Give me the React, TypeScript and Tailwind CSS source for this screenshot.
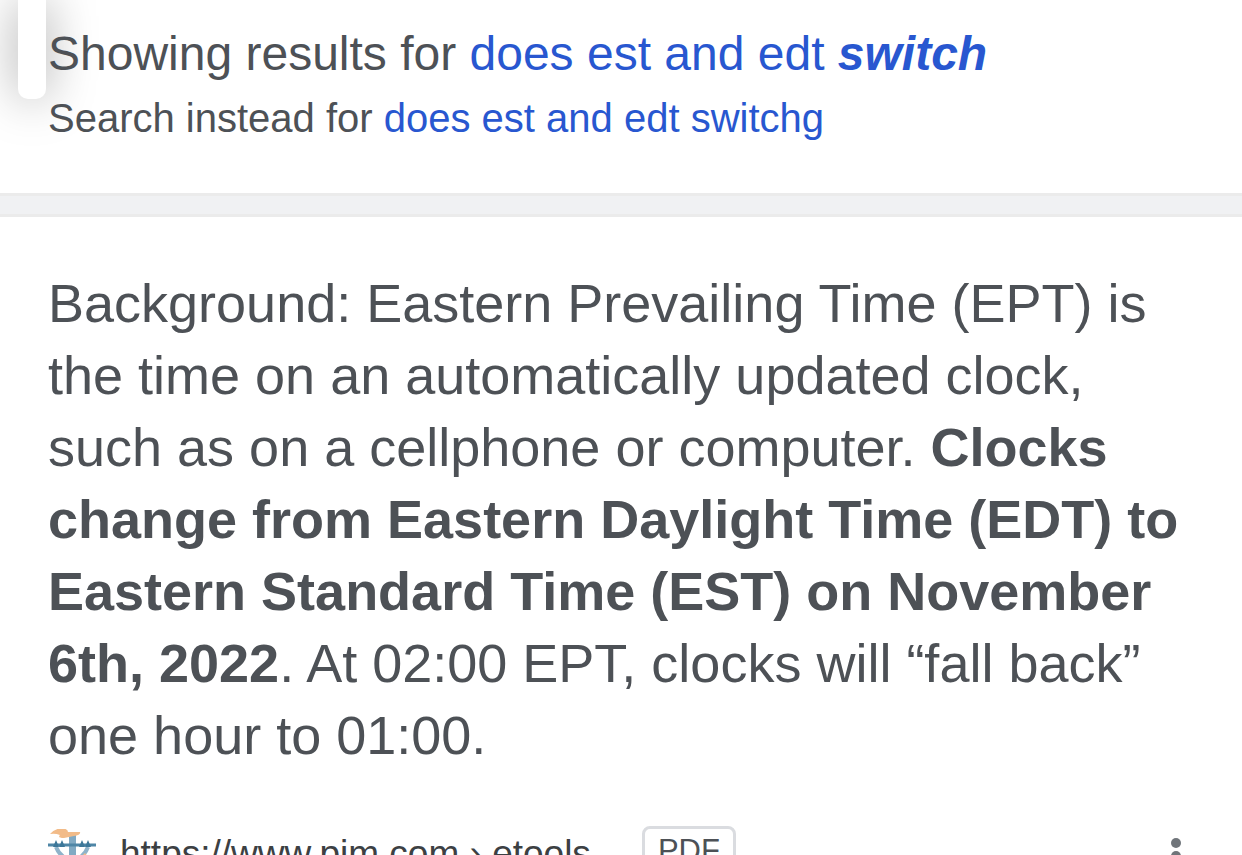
const PjmLogo = () => (
    <svg viewBox="0 0 48 48" className="mt-[3px] size-12 shrink-0" aria-hidden="true">
        <path d="M21 6h7v42h-7z" fill="#82aac3" />
        <path d="M8 18 Q12 28 22 31 M40 18 Q36 28 27 31" fill="none" stroke="#8fb3ca" strokeWidth="4" />
        <path d="M2 5 Q6 0 14 -1 Q20 0 20 3 L32 3 Q33 6 26 7 L16 9 Q9 9 12 6 Q7 4 2 5Z" fill="#f2bb88" />
        <path d="M0 16h48" stroke="#4f86a6" strokeWidth="3" />
        <path d="M5 18l3-7 3 7zM11 18l3-7 3 7zM31 18l3-7 3 7zM37 18l3-7 3 7z" fill="#3c7799" />
        <path d="M33 28l4-4 3 4z" fill="#f2bb88" />
    </svg>
);

export default function App() {
    return (
        <div className="relative h-screen overflow-hidden bg-white font-['Liberation_Sans',Arial,sans-serif] text-[#4d5156]">
            <div className="absolute top-0 left-[18px] h-[99px] w-7 rounded-b-[10px] bg-white shadow-[0_0_48px_rgba(0,0,0,0.36)]" />
            <header className="relative px-12 pt-[26px] pb-[47px]">
                <p className="text-[48px] leading-[56px] whitespace-nowrap">
                    Showing results for{' '}
                    <a href="#results" className="text-[#2857d0]">
                        does est and edt <b><i>switch</i></b>
                    </a>
                </p>
                <p className="mt-2 text-[40px] leading-[56px] whitespace-nowrap">
                    Search instead for{' '}
                    <a href="#original" className="text-[#2857d0]">does est and edt switchg</a>
                </p>
            </header>
            <div className="h-6 border-t-3 border-b-3 border-[#ebebeb] bg-[#f0f1f3]" />
            <main className="px-12 pt-[50px]">
                <p className="text-[54px] leading-[72px] whitespace-nowrap">
                    Background: Eastern Prevailing Time (EPT) is<br />
                    the time on an automatically updated clock,<br />
                    such as on a cellphone or computer. <b>Clocks</b><br />
                    <b>change from Eastern Daylight Time (EDT) to</b><br />
                    <b>Eastern Standard Time (EST) on November</b><br />
                    <b>6th, 2022</b>. At 02:00 EPT, clocks will “fall back”<br />
                    one hour to 01:00.
                </p>
                <div className="mt-[55px] flex items-start">
                    <PjmLogo />
                    <a href="#pjm" className="mt-1 ml-6 text-[37px] leading-[48px] text-[#3c4043]">
                        https://www.pjm.com › etools
                    </a>
                    <span className="ml-[51px] rounded-lg border-3 border-[#dadce0] px-[13px] text-[31px] leading-[44px]">
                        PDF
                    </span>
                    <button type="button" aria-label="More about this result" className="mt-3 mr-[13px] ml-auto">
                        <svg viewBox="0 0 10 36" className="h-9 w-[10px]" fill="#70757a">
                            <circle cx="5" cy="5" r="5" />
                            <circle cx="5" cy="18" r="5" />
                            <circle cx="5" cy="31" r="5" />
                        </svg>
                    </button>
                </div>
            </main>
        </div>
    );
}
